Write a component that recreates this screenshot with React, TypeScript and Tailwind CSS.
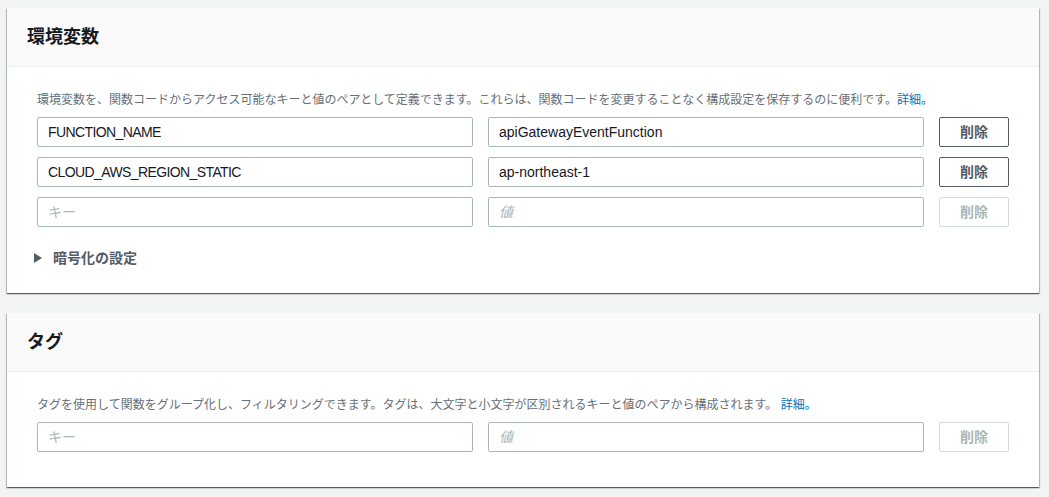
import React from "react";

const font = "font-['Liberation_Sans','Noto_Sans_CJK_JP',sans-serif]";

interface Pair {
  key: string;
  value: string;
}

const DeleteButton: React.FC<{ disabled?: boolean }> = ({ disabled }) => (
  <button
    type="button"
    disabled={disabled}
    className={
      disabled
        ? "w-[70px] h-[30px] shrink-0 rounded-[2px] border border-[#d5dbdb] bg-white text-[14px] font-bold text-[#aab7b8]"
        : "w-[70px] h-[30px] shrink-0 rounded-[2px] border border-[#545b64] bg-white text-[14px] font-bold text-[#545b64]"
    }
  >
    削除
  </button>
);

const PairRow: React.FC<{ pair?: Pair }> = ({ pair }) => (
  <div className="flex gap-[15px]">
    <input
      readOnly
      value={pair?.key ?? ""}
      placeholder="キー"
      className="flex-1 min-w-0 h-[30px] rounded-[2px] border border-[#aab7b8] bg-white px-[10px] text-[14px] tracking-[-0.6px] text-[#16191f] outline-none placeholder:tracking-normal placeholder:text-[#aab7b8]"
    />
    <input
      readOnly
      value={pair?.value ?? ""}
      placeholder="値"
      className="flex-1 min-w-0 h-[30px] rounded-[2px] border border-[#aab7b8] bg-white px-[10px] text-[14px] text-[#16191f] outline-none placeholder:text-[#aab7b8] placeholder:italic"
    />
    <DeleteButton disabled={!pair} />
  </div>
);

const Card: React.FC<{ title: string; children: React.ReactNode }> = ({ title, children }) => (
  <div className="bg-white shadow-[0_1px_1px_0_rgba(0,28,36,0.5),1px_1px_1px_0_rgba(0,28,36,0.2),-1px_1px_1px_0_rgba(0,28,36,0.2)]">
    <div className="h-[59px] flex items-center px-[20px] bg-[#fafafa] border-b border-[#eaeded]">
      <h2 className="text-[18px] font-bold text-[#16191f] leading-none">{title}</h2>
    </div>
    {children}
  </div>
);

export default function App() {
  const envVars: Pair[] = [
    { key: "FUNCTION_NAME", value: "apiGatewayEventFunction" },
    { key: "CLOUD_AWS_REGION_STATIC", value: "ap-northeast-1" },
  ];

  return (
    <div className={`${font} min-h-[497px] bg-[#f2f3f3] pt-[8px] pl-[7px] pr-[10px] pb-[9px]`}>
      <div className="flex flex-col gap-[20px]">
        <Card title="環境変数">
          <div className="px-[30px] pt-[24px] pb-[25px]">
            <p className="text-[12px] leading-[18px] text-[#687078] mb-[8px]">
              環境変数を、関数コードからアクセス可能なキーと値のペアとして定義できます。これらは、関数コードを変更することなく構成設定を保存するのに便利です。
              <a className="text-[#0073bb]">詳細。</a>
            </p>
            <div className="flex flex-col gap-[10px]">
              {envVars.map((p) => (
                <PairRow key={p.key} pair={p} />
              ))}
              <PairRow />
            </div>
            <div className="mt-[21px] -ml-[3px] flex items-center gap-[11px] h-[20px]">
              <svg width="8" height="10" viewBox="0 0 8 10">
                <path d="M0 0 L8 5 L0 10 Z" fill="#545b64" />
              </svg>
              <span className="text-[14px] font-bold text-[#545b64]">暗号化の設定</span>
            </div>
          </div>
        </Card>
        <Card title="タグ">
          <div className="px-[30px] pt-[24px] pb-[35px]">
            <p className="text-[12px] leading-[18px] text-[#687078] mb-[8px]">
              タグを使用して関数をグループ化し、フィルタリングできます。タグは、大文字と小文字が区別されるキーと値のペアから構成されます。
              <a className="text-[#0073bb]"> 詳細。</a>
            </p>
            <PairRow />
          </div>
        </Card>
      </div>
    </div>
  );
}
